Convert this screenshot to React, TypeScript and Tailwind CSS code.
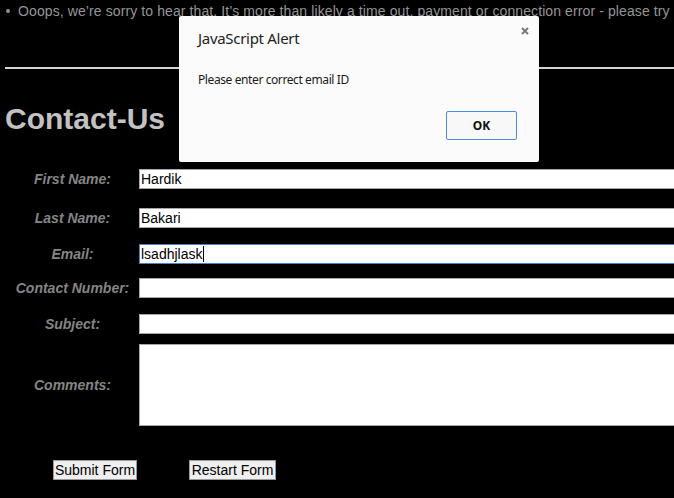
import React from "react";

const arial = { fontFamily: '"Liberation Sans", Arial, sans-serif' };

function Row({ label, children, mt, rowH = "h-[20px]" }: { label: string; children: React.ReactNode; mt: string; rowH?: string }) {
  return (
    <div className={`flex items-center ${mt} ${rowH}`}>
      <div className="w-[137px] shrink-0 pl-[8px] text-center text-[14px] font-bold italic leading-[16px] text-[#858585]">
        {label}
      </div>
      <div className="ml-[2px] flex-1 h-full">{children}</div>
    </div>
  );
}

function Field({ value, focused }: { value?: string; focused?: boolean }) {
  return (
    <div
      className={`h-full w-[600px] bg-white border ${focused ? "border-[#4a7fd4]" : "border-[#a6a6a6]"} pl-[1px] flex items-center text-[14px] leading-[16px] text-black`}
    >
      {value}
      {focused && <span className="inline-block w-[1px] h-[16px] bg-black ml-[1px]" />}
    </div>
  );
}

export default function App() {
  return (
    <div className="relative w-[674px] h-[498px] bg-black overflow-hidden" style={arial}>
      {/* bullet line */}
      <div className="flex items-center pt-[3px] h-[19px] whitespace-nowrap">
        <span className="ml-[6px] w-[4px] h-[4px] rounded-full bg-[#8f8f8f] shrink-0" />
        <span className="ml-[8px] text-[14px] leading-[16px] text-[#959595] tracking-[0.1px]">
          Ooops, we’re sorry to hear that. It’s more than likely a time out, payment or connection error - please try
        </span>
      </div>
      <div className="ml-[5px] mt-[48px] h-[2px] bg-[#d4d4d4]" />
      <h1 className="mt-[33px] pl-[5px] text-[30px] font-bold leading-[34px] text-[#c2c2c2]">Contact-Us</h1>

      <div className="flex flex-col">
        <Row label="First Name:" mt="mt-[33px]">
          <Field value="Hardik" />
        </Row>
        <Row label="Last Name:" mt="mt-[19px]">
          <Field value="Bakari" />
        </Row>
        <Row label="Email:" mt="mt-[16px]">
          <Field value="lsadhjlask" focused />
        </Row>
        <Row label="Contact Number:" mt="mt-[14px]">
          <Field />
        </Row>
        <Row label="Subject:" mt="mt-[16px]">
          <Field />
        </Row>
        <Row label="Comments:" mt="mt-[10px]" rowH="h-[82px]">
          <div className="h-full w-[600px] bg-white border border-[#a6a6a6]" />
        </Row>
        <div className="flex mt-[34px] h-[20px]">
          <button className="ml-[53px] w-[84px] h-[20px] bg-[#efefef] border border-[#9a9a9a] text-[14px] leading-[16px] text-black text-center">
            Submit Form
          </button>
          <button className="ml-[52px] w-[87px] h-[20px] bg-[#efefef] border border-[#9a9a9a] text-[14px] leading-[16px] text-black text-center">
            Restart Form
          </button>
        </div>
      </div>

      {/* alert dialog */}
      <div
        className="absolute left-[179px] top-[16px] w-[360px] h-[146px] bg-[#fbfbfb] rounded-[2px] flex flex-col pt-[12px] px-[19px]"
        style={{ fontFamily: '"Noto Sans", "Open Sans", sans-serif' }}
      >
        <svg className="absolute left-[342px] top-[11px]" width="8" height="8" viewBox="0 0 8 8">
          <path d="M1 1 L7 7 M7 1 L1 7" stroke="#7a7a7a" strokeWidth="2" strokeLinecap="butt" />
        </svg>
        <div className="text-[15px] leading-[20px] text-[#222] tracking-[-0.3px]">JavaScript Alert</div>
        <div className="mt-[24px] text-[12px] leading-[16px] text-[#1a1a1a] tracking-[-0.4px]">Please enter correct email ID</div>
        <div className="mt-[23px] flex justify-end pr-[3px]">
          <button className="w-[71px] h-[29px] bg-[#f8f8f8] border border-[#4d88ea] rounded-[2px] text-[12px] font-bold text-[#111]">
            OK
          </button>
        </div>
      </div>
    </div>
  );
}
